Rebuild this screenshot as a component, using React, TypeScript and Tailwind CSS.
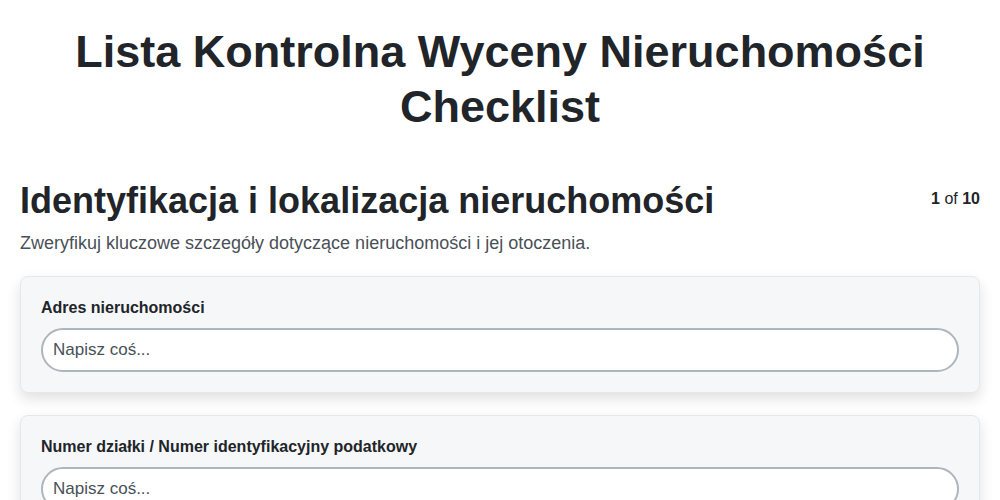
import React from 'react';

const fields = [
  { label: 'Adres nieruchomości' },
  { label: 'Numer działki / Numer identyfikacyjny podatkowy' },
  { label: 'Powierzchnia działki' },
];

export default function App() {
  return (
    <main className="min-h-screen bg-white px-5 pt-6 pb-10 font-['Liberation_Sans',Arial,sans-serif] text-[#212529]">
      <h1 className="text-center text-[45px] leading-[55px] font-bold">
        Lista Kontrolna Wyceny Nieruchomości Checklist
      </h1>

      <section className="mt-[45px]">
        <div className="flex items-start justify-between">
          <h2 className="text-4xl leading-[1.2] font-bold">Identyfikacja i lokalizacja nieruchomości</h2>
          <div className="pt-[8px] text-base leading-6">
            <span className="font-bold">1</span> of <span className="font-bold">10</span>
          </div>
        </div>
        <p className="mt-[8px] text-lg leading-[27px] text-[#495057]">
          Zweryfikuj kluczowe szczegóły dotyczące nieruchomości i jej otoczenia.
        </p>

        <div className="mt-[19px] flex flex-col gap-[22px]">
          {fields.map((f) => (
            <div
              key={f.label}
              className="rounded-lg border border-[#e5e7eb] bg-[#f6f7f9] px-5 pt-[21px] pb-5 shadow-[0_6px_14px_rgba(0,0,0,0.12)]"
            >
              <label className="block text-base leading-[1.2] font-bold">{f.label}</label>
              <input
                type="text"
                placeholder="Napisz coś..."
                className="mt-[11px] block w-full rounded-full border-2 border-[#adb5bd] bg-white px-[10px] py-2 text-[17px] leading-[23.5px] text-[#212529] placeholder:text-[#495057] outline-none"
              />
            </div>
          ))}
        </div>
      </section>
    </main>
  );
}
